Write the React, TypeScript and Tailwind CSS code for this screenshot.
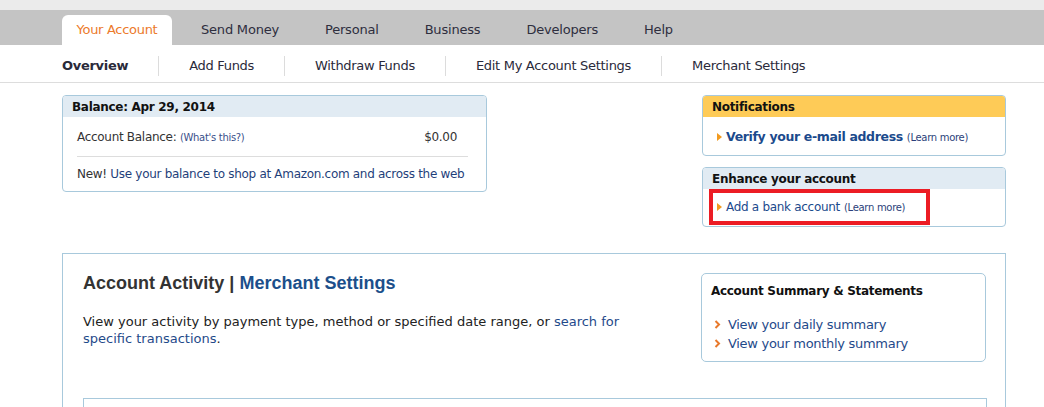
import React from "react";

const Tri = () => (
  <svg width="5" height="8" viewBox="0 0 5 8" className="inline-block mr-[4px] mb-[1px] shrink-0">
    <path d="M0 0 L5 4 L0 8 Z" fill="#f29a1f" />
  </svg>
);

const Chev = () => (
  <svg width="7" height="9" viewBox="0 0 7 9" className="inline-block mr-[7px] mb-[1px] shrink-0">
    <path d="M1.5 1 L5 4.5 L1.5 8" stroke="#e8792c" strokeWidth="2" fill="none" />
  </svg>
);

export default function App() {
  const tabs = ["Send Money", "Personal", "Business", "Developers", "Help"];
  const sub = ["Add Funds", "Withdraw Funds", "Edit My Account Settings", "Merchant Settings"];
  return (
    <div className="w-[1044px] h-[407px] overflow-hidden bg-white font-['DejaVu_Sans',Verdana,sans-serif] text-[#333] tracking-[-0.3px]">
      <div className="h-[10px] bg-[#ebebeb]" />
      <div className="h-[35px] bg-[#c4c4c4] flex items-end pl-[62px]">
        <div className="h-[30px] w-[110px] bg-white rounded-t-[6px] flex items-center justify-center text-[13px] text-[#ec7a2b] pb-[1px]">
          Your Account
        </div>
        <div className="flex items-center h-[30px] pl-[6px] pb-[1px] tracking-[-0.2px]">
          {tabs.map((t) => (
            <div key={t} className="px-[23px] text-[13px] text-[#2e2e3e] whitespace-nowrap">
              {t}
            </div>
          ))}
        </div>
      </div>
      <div className="h-[38px] border-b border-[#dddddd] flex items-center pl-[62px] pt-[5px] text-[13px] text-[#2a2a3a]">
        <div className="pr-[30px] font-bold">Overview</div>
        {sub.map((s) => (
          <div key={s} className="flex items-center">
            <div className="w-px h-[20px] bg-[#dcdcdc]" />
            <div className="px-[30px] whitespace-nowrap">{s}</div>
          </div>
        ))}
      </div>

      <div className="ml-[62px] w-[944px] pt-[12px]">
        <div className="flex justify-between">
          <div className="w-[425px] h-[97px] border border-[#a8c9dc] rounded-[4px] overflow-hidden">
            <div className="h-[21px] bg-[#e1ebf3] pl-[9px] flex items-center text-[12px] font-bold text-[#111]">
              Balance: Apr 29, 2014
            </div>
            <div className="pl-[14px] pr-[18px]">
              <div className="flex justify-between items-center h-[18px] mt-[11px] text-[12px] pr-[11px]">
                <span className="whitespace-nowrap">
                  Account Balance: <span className="text-[10px] text-[#3a4f8a]">(What's this?)</span>
                </span>
                <span>$0.00</span>
              </div>
              <div className="h-px bg-[#dddddd] mt-[10px]" />
              <div className="h-[18px] mt-[8px] flex items-center text-[12px] text-[#1f3f7a] whitespace-nowrap">
                <span className="text-[#333]">New!</span>&nbsp;Use your balance to shop at Amazon.com and across the web
              </div>
            </div>
          </div>

          <div className="w-[304px] flex flex-col gap-[11px]">
            <div className="h-[61px] border border-[#a8c9dc] rounded-[4px] overflow-hidden">
              <div className="h-[21px] bg-[#fecb57] pl-[9px] flex items-center text-[12px] font-bold text-[#111]">
                Notifications
              </div>
              <div className="pl-[14px] mt-[11px] h-[18px] flex items-center text-[12px] whitespace-nowrap">
                <Tri />
                <span className="font-bold text-[12.5px] tracking-[-0.35px] text-[#1b4a8c]">Verify your e-mail address</span>
                <span className="text-[10px] text-[#2b3f7a] ml-[4px]">(Learn more)</span>
              </div>
            </div>
            <div className="h-[60px] border border-[#a8c9dc] rounded-[4px] overflow-hidden">
              <div className="h-[21px] bg-[#e1ebf3] pl-[9px] flex items-center text-[12px] font-bold text-[#111]">
                Enhance your account
              </div>
              <div className="ml-[6px] w-[221px] h-[36px] border-[4px] border-[#ec1c24] flex items-center pl-[4px] whitespace-nowrap">
                <Tri />
                <span className="text-[12px] text-[#1b4a8c]">Add a bank account</span>
                <span className="text-[10px] text-[#2b3f7a] ml-[4px]">(Learn more)</span>
              </div>
            </div>
          </div>
        </div>

        <div className="mt-[26px] h-[200px] border border-[#a8c9dc] px-[20px] pt-[18px]">
          <div className="flex justify-between">
            <div className="w-[565px]">
              <div className="font-['Liberation_Sans',Arial,sans-serif] font-bold text-[18px] leading-[20px] text-[#333] pt-[1px] tracking-normal">
                Account Activity | <span className="text-[#1c4f8b]">Merchant Settings</span>
              </div>
              <p className="mt-[20px] text-[13px] leading-[17px] text-[#222] tracking-normal">
                View your activity by payment type, method or specified date range, or{" "}
                <span className="text-[#1f4a8a]">search for specific transactions</span>.
              </p>
            </div>
            <div className="w-[285px] h-[89px] mt-[1px] border border-[#a8c9dc] rounded-[5px] pl-[9px] pt-[9px] mr-[-1px]">
              <div className="text-[12px] font-bold text-[#111] leading-[16px]">Account Summary &amp; Statements</div>
              <div className="mt-[16px] text-[13px] leading-[19px] text-[#1f4a8a]">
                <div className="flex items-center pl-[3px]"><Chev />View your daily summary</div>
                <div className="flex items-center pl-[3px]"><Chev />View your monthly summary</div>
              </div>
            </div>
          </div>
          <div className="mt-[36px] h-[40px] border border-[#a8c9dc] mr-[-2px]" />
        </div>
      </div>
    </div>
  );
}
